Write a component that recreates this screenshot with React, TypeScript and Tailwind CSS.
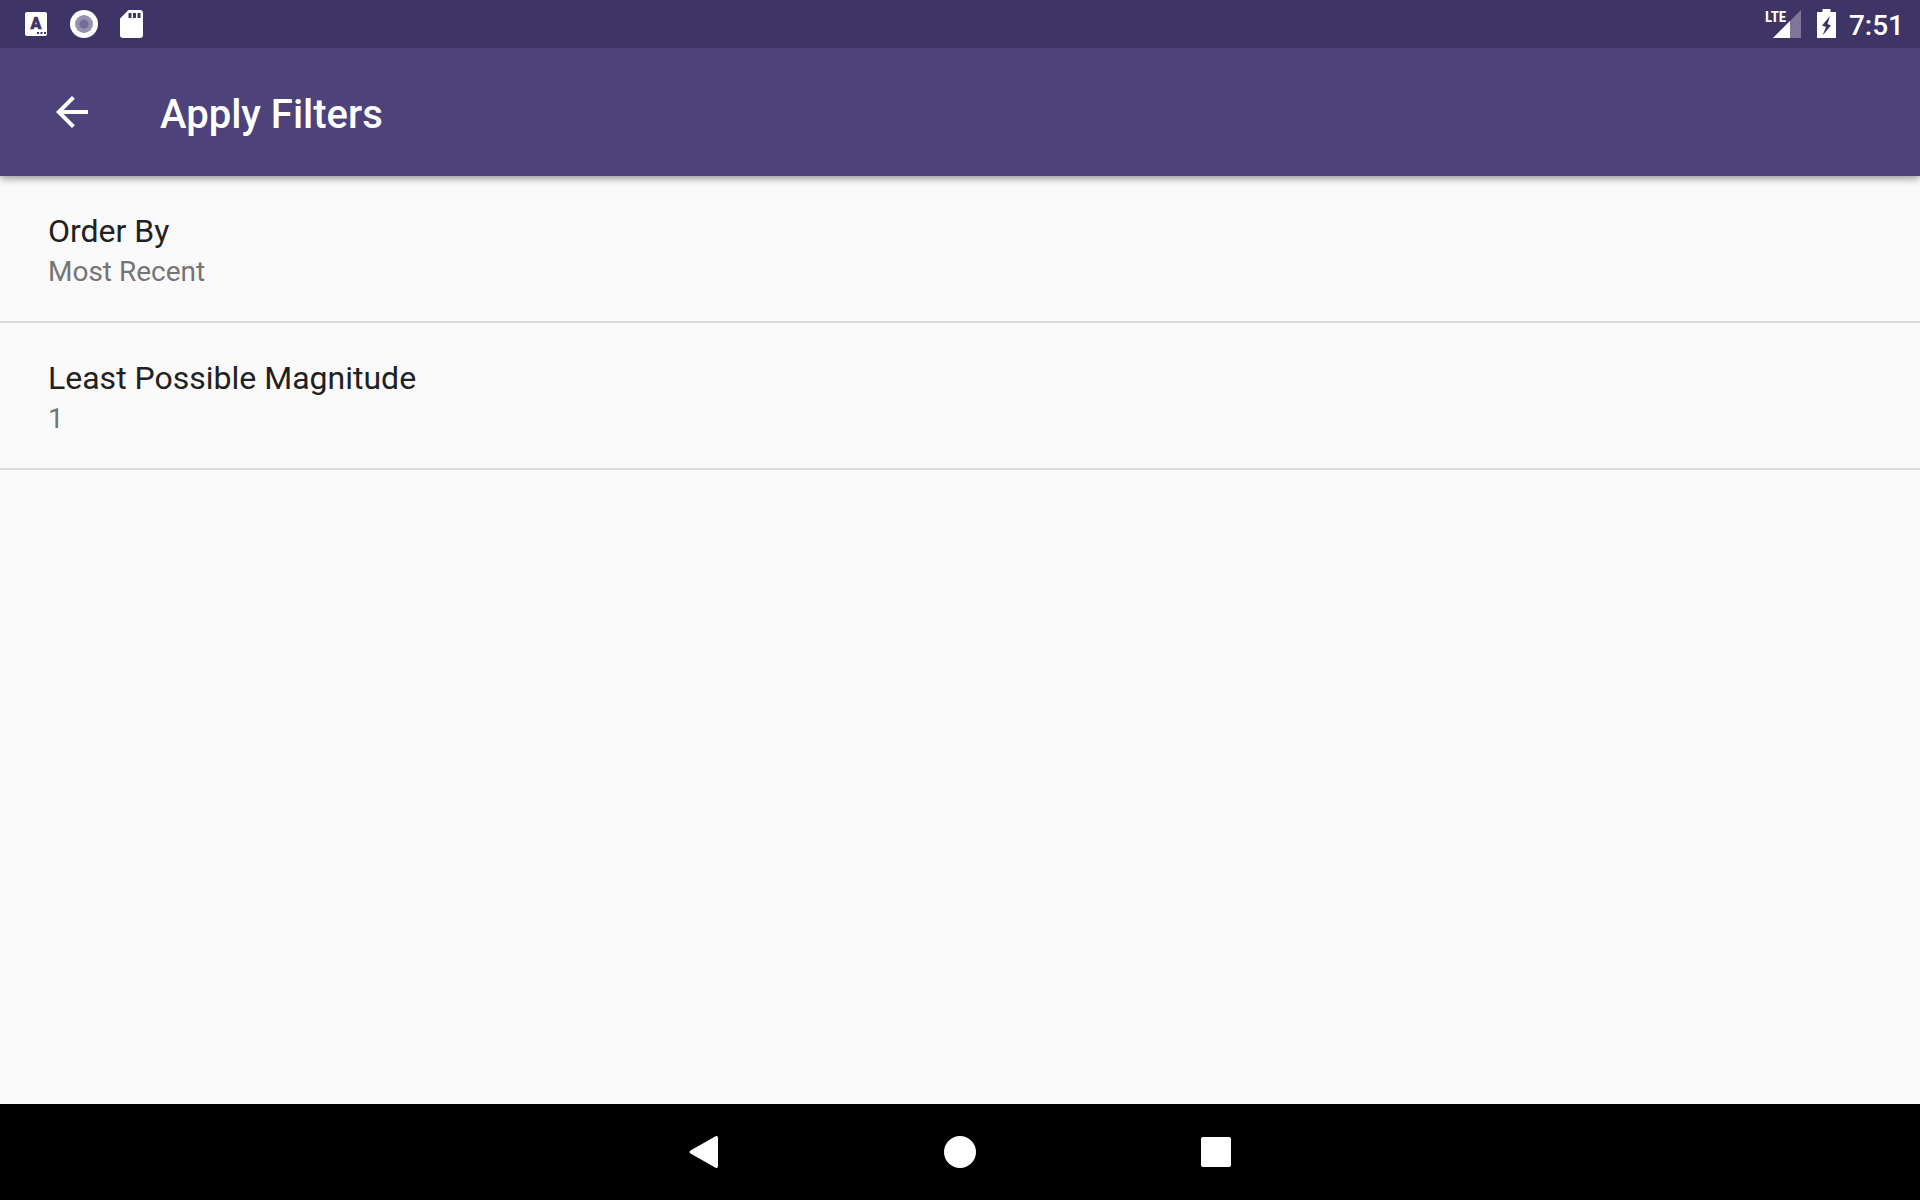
import type { ReactNode } from 'react';

function StatusIcon({ children }: { children: ReactNode }) {
  return (
    <svg viewBox="0 0 48 48" className="size-12" aria-hidden="true">{children}</svg>
  );
}

function NavButton({ label, children }: { label: string; children: ReactNode }) {
  return (
    <button aria-label={label} className="flex h-24 w-64 items-center justify-center">
      <svg viewBox="0 0 32 32" className="size-8 fill-white" aria-hidden="true">{children}</svg>
    </button>
  );
}

function Preference({ title, summary }: { title: string; summary: string }) {
  return (
    <li className="border-b-2 border-[#dadada]">
      <button className="flex w-full flex-col items-start px-12 pt-[34px] pb-[29px] text-left">
        <span className="text-[32px] leading-[42px] text-[#212121]">{title}</span>
        <span className="text-[28px] leading-10 text-[#757575]">{summary}</span>
      </button>
    </li>
  );
}

export default function App() {
  return (
    <div className="flex min-h-screen flex-col bg-[#fafafa] font-['Roboto',sans-serif]">
      <div className="relative z-10 flex h-12 items-center justify-between bg-[#3e3466] pr-4 pl-3 text-white">
        <div className="flex items-center">
          <StatusIcon>
            <rect x="13" y="12" width="22" height="24" rx="2" fill="#fff" />
            <text x="24" y="29" textAnchor="middle" fill="#3e3466" stroke="#3e3466" strokeWidth="0.600" fontSize="16" fontWeight="900" fontFamily="Roboto, sans-serif">A</text>
            <path d="M25 32h2v2h-2zM28.500 32h2v2h-2zM32 32h2v2h-2z" fill="#3e3466" />
          </StatusIcon>
          <StatusIcon>
            <circle cx="24" cy="24" r="14" fill="#fff" />
            <circle cx="24" cy="24" r="9" fill="#9791af" />
            <circle cx="24" cy="24" r="4.500" fill="#746d96" />
          </StatusIcon>
          <StatusIcon>
            <path d="M20.500 10H32a3 3 0 013 3v22a3 3 0 01-3 3H15a3 3 0 01-3-3V18.500z" fill="#fff" />
            <path d="M20.500 13h3v5h-3zM25 13h3v5h-3zM29.500 13h3v5h-3z" fill="#3e3466" />
          </StatusIcon>
        </div>
        <div className="flex items-center">
          <svg viewBox="0 0 36 48" className="h-12 w-9" role="img" aria-label="LTE signal">
            <path d="M36 10v28H8z" fill="#7d7699" />
            <path d="M25 21v17H8z" fill="#fff" />
            <text x="0" y="22" fill="#fff" fontSize="15" fontWeight="700" fontFamily="'Roboto Condensed','Liberation Sans Narrow',Roboto,sans-serif">LTE</text>
          </svg>
          <svg viewBox="0 0 20 30" className="ml-4 h-[30px] w-5" aria-hidden="true">
            <path d="M5.500 0h8v3H19v26H0V3h5.500z" fill="#fff" />
            <path d="M13 7L5 16.500l4 1.500-3.500 8.500L14 16.500 10.500 15z" fill="#3e3466" />
          </svg>
          <span className="ml-3 pt-[3px] text-[28px] leading-8 font-medium">7:51</span>
        </div>
      </div>
      <header className="flex h-32 items-center bg-[#4d4279] pl-12 text-white shadow-[0_2px_8px_rgba(0,0,0,0.45)]">
        <button aria-label="Back" className="flex size-12 items-center justify-center">
          <svg viewBox="0 0 24 24" className="size-12 fill-white" aria-hidden="true">
            <path d="M20 11H7.830l5.590-5.590L12 4l-8 8 8 8 1.410-1.410L7.830 13H20v-2z" />
          </svg>
        </button>
        <h1 className="ml-16 pt-1.5 text-[40px] leading-12 font-medium">Apply Filters</h1>
      </header>
      <main className="flex-1">
        <ul>
          <Preference title="Order By" summary="Most Recent" />
          <Preference title="Least Possible Magnitude" summary="1" />
        </ul>
      </main>
      <nav className="flex h-24 items-center justify-center bg-black">
        <NavButton label="Back"><path d="M27.500 0.300Q30 -0.500 30 2v28q0 2.500-2.500 1.700L2.500 17.500q-2-1.500 0-3z" /></NavButton>
        <NavButton label="Home"><circle cx="16" cy="16" r="16" /></NavButton>
        <NavButton label="Recent apps"><rect x="1" y="1" width="30" height="30" rx="2" /></NavButton>
      </nav>
    </div>
  );
}
